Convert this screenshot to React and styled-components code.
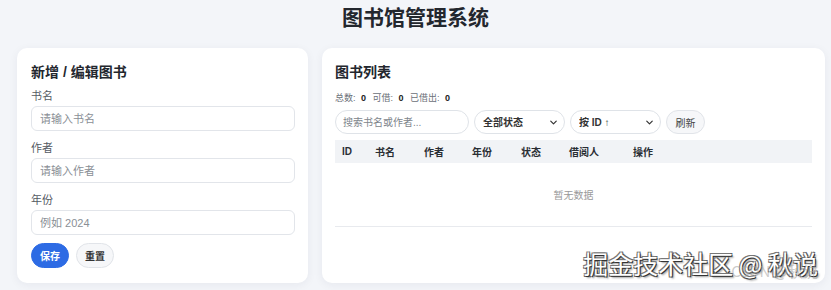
import React from 'react';
import styled, { createGlobalStyle } from 'styled-components';
import { ChevronDown } from 'lucide-react';

const GlobalStyle = createGlobalStyle`
  body {
    margin: 0;
    background: #f3f5f9;
    font-family: "Liberation Sans", "Noto Sans CJK SC", sans-serif;
    color: #222;
  }
`;

const columns = [
  { label: 'ID', width: 33 },
  { label: '书名', width: 49 },
  { label: '作者', width: 48 },
  { label: '年份', width: 49 },
  { label: '状态', width: 48 },
  { label: '借阅人', width: 64 },
  { label: '操作' },
];

export default function App() {
  return (
    <Page>
      <GlobalStyle />
      <Title>图书馆管理系统</Title>
      <Layout>
        <Card>
          <CardTitle>新增 / 编辑图书</CardTitle>
          <Fields>
            <Field>
              <Label>书名</Label>
              <Input placeholder="请输入书名" />
            </Field>
            <Field>
              <Label>作者</Label>
              <Input placeholder="请输入作者" />
            </Field>
            <Field>
              <Label>年份</Label>
              <Input placeholder="例如 2024" />
            </Field>
          </Fields>
          <Actions>
            <Button primary>保存</Button>
            <Button>重置</Button>
          </Actions>
        </Card>

        <Card list>
          <CardTitle>图书列表</CardTitle>
          <Stats>
            总数: <b>0</b> 可借: <b>0</b> 已借出: <b>0</b>
          </Stats>
          <Toolbar>
            <Search placeholder="搜索书名或作者..." />
            <SelectWrap>
              <Select defaultValue="all">
                <option value="all">全部状态</option>
              </Select>
              <Chevron size={11} strokeWidth={2.6} />
            </SelectWrap>
            <SelectWrap>
              <Select defaultValue="id">
                <option value="id">按 ID ↑</option>
              </Select>
              <Chevron size={11} strokeWidth={2.6} />
            </SelectWrap>
            <RefreshButton>刷新</RefreshButton>
          </Toolbar>
          <Table>
            <colgroup>
              {columns.map((c) => (
                <col key={c.label} style={c.width ? { width: c.width } : undefined} />
              ))}
            </colgroup>
            <thead>
              <tr>
                {columns.map((c) => (
                  <Th key={c.label}>{c.label}</Th>
                ))}
              </tr>
            </thead>
            <tbody>
              <tr>
                <Empty colSpan={columns.length}>暂无数据</Empty>
              </tr>
            </tbody>
          </Table>
        </Card>
      </Layout>
      <Watermark>
        掘金技术社区 @ 秋说
        <Sub>CSDN @秋说</Sub>
      </Watermark>
    </Page>
  );
}

const Page = styled.div`
  position: relative;
  width: 831px;
  height: 290px;
  overflow: hidden;
`;

const Title = styled.h1`
  margin: 0;
  padding-top: 4px;
  height: 44px;
  text-align: center;
  font-size: 21px;
  line-height: 28px;
  font-weight: 700;
  color: #23272e;
`;

const Layout = styled.div`
  display: grid;
  grid-template-columns: 291px 503px;
  gap: 14px;
  padding-left: 17px;
  align-items: stretch;
`;

const Card = styled.section`
  background: #fff;
  border-radius: 10px;
  box-shadow: 0 2px 10px rgba(30, 40, 60, 0.06);
  padding: 14px 13px 15px ${(p) => (p.list ? '13px' : '14px')};
`;

const CardTitle = styled.h2`
  margin: 0 0 6px;
  font-size: 14px;
  line-height: 20px;
  font-weight: 700;
  color: #23272e;
`;

const Fields = styled.div`
  display: flex;
  flex-direction: column;
  gap: 9px;
`;

const Field = styled.label`
  display: flex;
  flex-direction: column;
  gap: 2px;
`;

const Label = styled.span`
  font-size: 11px;
  line-height: 16px;
  color: #555b63;
`;

const Input = styled.input`
  box-sizing: border-box;
  height: 25px;
  width: 100%;
  border: 1px solid #e2e5ea;
  border-radius: 6px;
  padding: 0 8px;
  font: inherit;
  font-size: 11px;
  color: #333;
  outline: none;
  &::placeholder {
    color: #8a8f96;
  }
`;

const Actions = styled.div`
  display: flex;
  gap: 7px;
  margin-top: 8px;
`;

const Button = styled.button`
  height: 25px;
  width: 38px;
  padding: 0;
  border-radius: 13px;
  font: inherit;
  font-size: 10px;
  font-weight: 700;
  cursor: pointer;
  border: 1px solid ${(p) => (p.primary ? '#2d6be4' : '#e1e4e9')};
  background: ${(p) => (p.primary ? '#2d6be4' : '#f6f7f9')};
  color: ${(p) => (p.primary ? '#fff' : '#333')};
`;

const Stats = styled.div`
  font-size: 9px;
  line-height: 14px;
  color: #6b7078;
  margin-top: 9px;
  b {
    color: #222;
    margin: 0 4px 0 3px;
  }
`;

const Toolbar = styled.div`
  display: flex;
  gap: 5px;
  margin-top: 5px;
  align-items: center;
`;

const Search = styled.input`
  box-sizing: border-box;
  width: 134px;
  height: 24px;
  border: 1px solid #dfe3e8;
  border-radius: 12px;
  padding: 0 7px;
  font: inherit;
  font-size: 10px;
  outline: none;
  &::placeholder {
    color: #80858c;
  }
`;

const SelectWrap = styled.div`
  position: relative;
  width: 91px;
  height: 24px;
`;

const Select = styled.select`
  appearance: none;
  box-sizing: border-box;
  width: 100%;
  height: 100%;
  border: 1px solid #dfe3e8;
  border-radius: 12px;
  background: #fff;
  padding: 0 8px;
  font: inherit;
  font-size: 10px;
  font-weight: 700;
  color: #333;
  outline: none;
`;

const Chevron = styled(ChevronDown)`
  position: absolute;
  right: 6px;
  top: 7px;
  color: #333;
  pointer-events: none;
`;

const RefreshButton = styled.button`
  height: 24px;
  width: 39px;
  padding: 0;
  border: 1px solid #e1e4e9;
  border-radius: 12px;
  background: #f6f7f9;
  font: inherit;
  font-size: 10px;
  color: #444;
`;

const Table = styled.table`
  width: 477px;
  margin-top: 6px;
  border-collapse: collapse;
  table-layout: fixed;
  font-size: 10px;
`;

const Th = styled.th`
  background: #f1f3f6;
  height: 23px;
  padding: 0 0 0 7px;
  text-align: left;
  font-weight: 700;
  color: #2a2e34;
`;

const Empty = styled.td`
  height: 61px;
  text-align: center;
  color: #999;
  border-bottom: 1px solid #e8eaee;
`;

const Watermark = styled.div`
  position: absolute;
  right: 13px;
  top: 247px;
  font-family: "Noto Sans CJK SC", sans-serif;
  font-size: 25px;
  line-height: 32px;
  color: #fff;
  text-shadow: 1px 1px 0 #333, -1px -1px 0 #777, 1px -1px 0 #666, -1px 1px 0 #666, 2px 2px 2px rgba(0, 0, 0, 0.4);
  pointer-events: none;
`;

const Sub = styled.span`
  position: absolute;
  right: 0;
  top: 14px;
  font-size: 15px;
  line-height: 20px;
  color: rgba(160, 160, 160, 0.55);
  text-shadow: none;
`;
